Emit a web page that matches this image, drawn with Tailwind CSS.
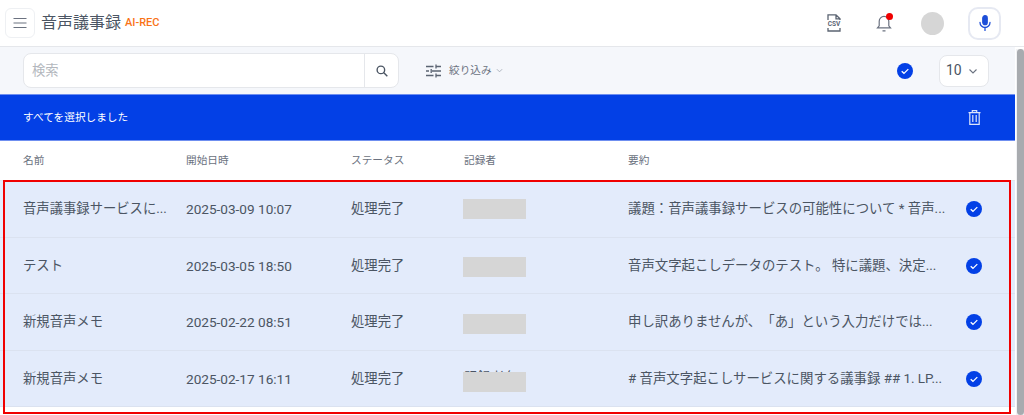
<!DOCTYPE html>
<html lang="ja">
<head>
    <meta charset="UTF-8">
    <title>音声議事録 AI-REC</title>
    <script src="https://cdn.jsdelivr.net/npm/@tailwindcss/browser@4"></script>
</head>
<body class="h-[415px] overflow-hidden bg-white text-[#4b5563] font-['Roboto','Noto_Sans_CJK_JP',sans-serif] [text-spacing-trim:space-all]">

    <!-- Top bar -->
    <header class="h-[47px] flex items-center bg-white border-b border-[#e5e7eb] pl-[5px] pr-[23px]">
        <button class="w-[30px] h-[30px] flex items-center justify-center rounded-md border border-[#eef0f3] text-[#6b7280]">
            <svg class="w-[14px] h-[14px]" viewBox="0 0 14 14" fill="none" stroke="currentColor" stroke-width="1.2"><path d="M.5 2.5h13M.5 7h13M.5 11.5h13"/></svg>
        </button>
        <h1 class="ml-[6px] text-[16px] leading-none text-[#4b5563]">音声議事録</h1>
        <span class="ml-[4px] text-[11px] font-medium text-[#f97316]">AI-REC</span>
        <div class="ml-auto flex items-center">
            <svg class="w-[14px] h-[18px] text-[#5b6472]" viewBox="0 0 14 18" fill="none" stroke="currentColor" stroke-width="1.3">
                <path d="M1 6V.8h8l4 4V6M1 14v3h12v-3M9 .8v4h4"/>
                <text x="7" y="12.4" text-anchor="middle" font-size="6.5" font-weight="700" fill="currentColor" stroke="none" font-family="Roboto">CSV</text>
            </svg>
            <div class="relative ml-[35px] w-[16px] h-[18px] text-[#6b7280]">
                <svg class="w-[16px] h-[18px]" viewBox="0 0 16 18" fill="none" stroke="currentColor" stroke-width="1.2"><path d="M1.5 13.8h13l-1.7-2V7.2a4.8 4.8 0 0 0-9.6 0v4.6zM6.5 16.8h3"/></svg>
                <span class="absolute top-[-1px] right-[-1px] w-[7px] h-[7px] rounded-full bg-[#f00000]"></span>
            </div>
            <div class="ml-[29px] w-[23px] h-[23px] rounded-full bg-[#d6d6d6]"></div>
            <button class="ml-[24px] w-[33px] h-[33px] flex items-center justify-center rounded-[10px] border-2 border-[#e6e9f2] text-[#1d4ed8]">
                <svg class="w-[12px] h-[16px]" viewBox="0 0 12 16" fill="none" stroke="currentColor" stroke-width="1.3" stroke-linecap="round"><rect x="3.8" y=".7" width="4.4" height="9" rx="2.2" fill="currentColor"/><path d="M1 7.5a5 5 0 0 0 10 0M6 12.5v3"/></svg>
            </button>
        </div>
    </header>

    <div class="mr-[9px]">
        <!-- Search and filter -->
        <div class="h-[47px] bg-[#f5f7fb] flex items-center pl-[23px] pr-[26px]">
            <div class="w-[376px] h-[35px] flex bg-white border border-[#e5e7eb] rounded-lg">
                <div class="flex-1 flex items-center px-[8px] text-[13.33px] text-[#b3b7bd]">検索</div>
                <div class="w-[34px] flex items-center justify-center border-l border-[#e5e7eb] text-[#4b5563]">
                    <svg class="w-[12px] h-[12px]" viewBox="0 0 14 14" fill="none" stroke="currentColor" stroke-width="1.6"><circle cx="5.7" cy="5.7" r="4.4"/><path d="M8.8 8.8l4.4 4.4"/></svg>
                </div>
            </div>
            <svg class="ml-[27px] w-[15px] h-[14px] text-[#5b6472]" viewBox="0 0 15 14" fill="none" stroke="currentColor" stroke-width="1.3"><path d="M0 2.5h7.5M10.5 2.5H15M10 .5v4M0 7h3M6 7h9M5.2 5v4M0 11.5h7.5M10.5 11.5H15M10 9.5v4"/></svg>
            <span class="ml-[8px] text-[10.67px] text-[#6b7280]">絞り込み</span>
            <svg class="ml-[4px] w-[7px] h-[7px] text-[#9ca3af]" viewBox="0 0 8 8" fill="none" stroke="currentColor" stroke-width=".9"><path d="M1 2.5l3 3 3-3"/></svg>
            <div class="ml-auto flex items-center">
                <svg class="w-[16px] h-[16px]" viewBox="0 0 17 17"><circle cx="8.5" cy="8.5" r="8.5" fill="#0340e6"/><path d="M5 8.8l2.4 2.2L12 6.5" fill="none" stroke="#fff" stroke-width="1.4"/></svg>
                <div class="ml-[26px] w-[50px] h-[32px] flex items-center justify-between pl-[6px] pr-[10px] bg-white border border-[#e5e7eb] rounded-lg text-[14px] text-[#4b5563]">
                    10
                    <svg class="w-[10px] h-[10px] text-[#6b7280]" viewBox="0 0 10 10" fill="none" stroke="currentColor" stroke-width="1.1"><path d="M1.5 3.5L5 7l3.5-3.5"/></svg>
                </div>
            </div>
        </div>

        <!-- Selection banner -->
        <div class="h-[47px] border-y border-[#6f8ff0] bg-[#0340e6] flex items-center justify-between pl-[23px] pr-[34px] text-white">
            <span class="text-[10.67px]">すべてを選択しました</span>
            <svg class="w-[13px] h-[15px] text-[#dbe4fb]" viewBox="0 0 13 15" fill="none" stroke="currentColor" stroke-width="1.2"><path d="M.5 2.6h12M4.3 2.5V.7h4.4v1.8M1.8 2.6v11.8h9.4V2.6M4.8 5v7M8.2 5v7"/></svg>
        </div>

        <!-- Column titles -->
        <div class="h-[39px] flex items-center pl-[23px] text-[10.67px] text-[#6b7280]">
            <div class="w-[163px]">名前</div>
            <div class="w-[165px]">開始日時</div>
            <div class="w-[113px]">ステータス</div>
            <div class="w-[164px]">記録者</div>
            <div>要約</div>
        </div>

        <!-- Selected rows -->
        <div class="border-t border-[#e5e7eb] bg-[#e3ebfb] text-[13.33px] text-[#4b5563]">
            <div class="h-[56.5px] flex items-center pl-[23px] border-b border-[#dbe2f0]">
                <div class="w-[163px]">音声議事録サービスに...</div>
                <div class="w-[165px] text-[13.6px]">2025-03-09 10:07</div>
                <div class="w-[112px]">処理完了</div>
                <div class="w-[165px]"><div class="mt-[1px] w-[63px] h-[20px] bg-[#d6d6d6]"></div></div>
                <div class="w-[338px] text-[13.4px]">議題：音声議事録サービスの可能性について * 音声...</div>
                <svg class="w-[16px] h-[16px]" viewBox="0 0 17 17"><circle cx="8.5" cy="8.5" r="8.5" fill="#0340e6"/><path d="M5 8.8l2.4 2.2L12 6.5" fill="none" stroke="#fff" stroke-width="1.4"/></svg>
            </div>
            <div class="h-[56.5px] flex items-center pl-[23px] pt-[1px] border-b border-[#dbe2f0]">
                <div class="w-[163px]">テスト</div>
                <div class="w-[165px] text-[13.6px]">2025-03-05 18:50</div>
                <div class="w-[112px]">処理完了</div>
                <div class="w-[165px]"><div class="mt-[2px] w-[63px] h-[20px] bg-[#d6d6d6]"></div></div>
                <div class="w-[338px] text-[13.4px]">音声文字起こしデータのテスト。 特に議題、決定...</div>
                <svg class="w-[16px] h-[16px]" viewBox="0 0 17 17"><circle cx="8.5" cy="8.5" r="8.5" fill="#0340e6"/><path d="M5 8.8l2.4 2.2L12 6.5" fill="none" stroke="#fff" stroke-width="1.4"/></svg>
            </div>
            <div class="h-[56.5px] flex items-center pl-[23px] border-b border-[#dbe2f0]">
                <div class="w-[163px]">新規音声メモ</div>
                <div class="w-[165px] text-[13.6px]">2025-02-22 08:51</div>
                <div class="w-[112px]">処理完了</div>
                <div class="w-[165px]"><div class="mt-[5px] w-[63px] h-[20px] bg-[#d6d6d6]"></div></div>
                <div class="w-[338px] text-[13.4px]">申し訳ありませんが、「あ」という入力だけでは...</div>
                <svg class="w-[16px] h-[16px]" viewBox="0 0 17 17"><circle cx="8.5" cy="8.5" r="8.5" fill="#0340e6"/><path d="M5 8.8l2.4 2.2L12 6.5" fill="none" stroke="#fff" stroke-width="1.4"/></svg>
            </div>
            <div class="h-[56.5px] flex items-center pl-[23px] pt-[1px] border-b border-[#dbe2f0]">
                <div class="w-[163px]">新規音声メモ</div>
                <div class="w-[165px] text-[13.6px]">2025-02-17 16:11</div>
                <div class="w-[112px]">処理完了</div>
                <div class="relative w-[165px] pl-[1px] -mt-[2px]">記録者名
                    <div class="absolute left-0 top-[4px] w-[63px] h-[20px] bg-[#d6d6d6]"></div>
                </div>
                <div class="w-[338px] text-[13.4px]"># 音声文字起こしサービスに関する議事録 ## 1. LP...</div>
                <svg class="w-[16px] h-[16px]" viewBox="0 0 17 17"><circle cx="8.5" cy="8.5" r="8.5" fill="#0340e6"/><path d="M5 8.8l2.4 2.2L12 6.5" fill="none" stroke="#fff" stroke-width="1.4"/></svg>
            </div>
        </div>
    </div>

    <!-- Scrollbar -->
    <div class="absolute top-[49px] right-0 bottom-0 w-[8px] bg-[#f1f2f4]">
        <div class="ml-auto w-[7px] h-full rounded-full bg-[#a8abaf]"></div>
    </div>

    <!-- Red highlight frame -->
    <div class="absolute left-[3px] top-[180px] w-[1008px] h-[234px] border-2 border-[#f00000] pointer-events-none"></div>
</body>
</html>
